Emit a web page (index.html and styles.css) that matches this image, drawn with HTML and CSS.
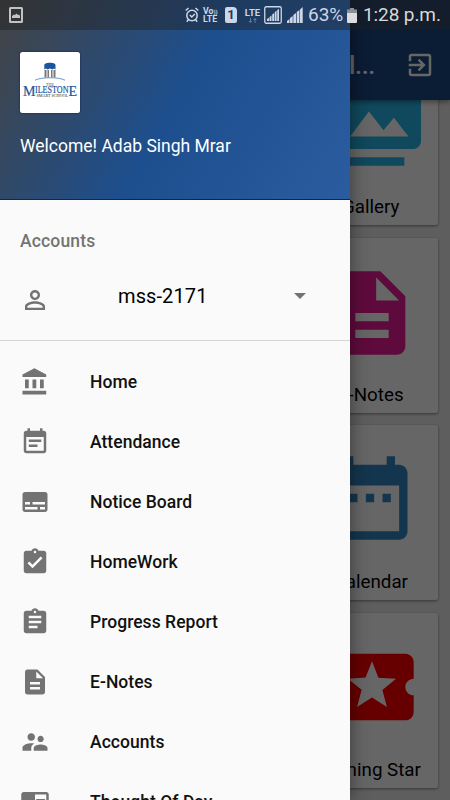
FILE: index.html
```
<!DOCTYPE html>
<html lang="en">
<head>
<meta charset="utf-8">
<title>The Milestone Smart School</title>
<link rel="stylesheet" href="styles.css">
</head>
<body>
<div class="screen">
  <div class="app">
    <header class="appbar">
      <span class="appbar-title">l...</span>
      <svg class="exit" viewBox="0 0 24 24"><path d="M10.09 15.59L11.5 17l5-5-5-5-1.41 1.41L12.67 11H3v2h9.67l-2.58 2.59zM19 3H5c-1.11 0-2 .9-2 2v4h2V5h14v14H5v-4H3v4c0 1.1.89 2 2 2h14c1.1 0 2-.9 2-2V5c0-1.1-.9-2-2-2z"/></svg>
    </header>
    <main class="tiles">
      <section class="tile gallery">
        <svg viewBox="0 0 24 24"><path d="M2 6H0v5h.01L0 20c0 1.1.9 2 2 2h18v-2H2V6zm20-2h-8l-2-2H6c-1.1 0-1.99.9-1.99 2L4 16c0 1.1.9 2 2 2h16c1.1 0 2-.9 2-2V6c0-1.1-.9-2-2-2zM7 15l4.5-6 3.5 4.51 2.5-3.01L21 15H7z"/></svg>
        <h2>Gallery</h2>
      </section>
      <section class="tile notes">
        <svg viewBox="0 0 24 24"><path d="M14 2H6c-1.1 0-1.99.9-1.99 2L4 20c0 1.1.89 2 1.99 2H18c1.1 0 2-.9 2-2V8l-6-6zm2 16H8v-2h8v2zm0-4H8v-2h8v2zm-3-5V3.5L18.5 9H13z"/></svg>
        <h2>E-Notes</h2>
      </section>
      <section class="tile calendar">
        <svg viewBox="0 0 24 24"><path d="M9 11H7v2h2v-2zm4 0h-2v2h2v-2zm4 0h-2v2h2v-2zm2-7h-1V2h-2v2H8V2H6v2H5c-1.11 0-1.99.9-1.99 2L3 20c0 1.1.89 2 2 2h14c1.1 0 2-.9 2-2V6c0-1.1-.9-2-2-2zm0 16H5V9h14v11z"/></svg>
        <h2>Calendar</h2>
      </section>
      <section class="tile star">
        <svg viewBox="0 0 24 24"><path d="M20 12c0-1.1.9-2 2-2V6c0-1.1-.9-2-2-2H4c-1.1 0-1.99.9-1.99 2v4c1.1 0 1.99.9 1.99 2s-.89 2-2 2v4c0 1.1.9 2 2 2h16c1.1 0 2-.9 2-2v-4c-1.1 0-2-.9-2-2zm-4.42 4.8L12 14.5l-3.58 2.3 1.08-4.12-3.29-2.69 4.24-.25L12 5.8l1.54 3.95 4.24.25-3.29 2.69 1.09 4.11z"/></svg>
        <h2>Shining Star</h2>
      </section>
    </main>
  </div>
  <div class="scrim"></div>

  <aside class="drawer">
    <div class="profile">
      <svg class="logo" viewBox="0 0 60 60">
        <path class="l-blue" d="M24.300 17v-4.500c0-3 11.200-3 11.200 0V17l-1.500-1-1.500 1-2.500-1-2.500 1-1.500-1z"/>
        <path class="l-pillar" d="M24.500 17.500h2V25h-2zM27.500 17.500H29V25h-1.500zM31 17.500h1.500V25H31zM33.500 17.500h2V25h-2z"/>
        <path class="l-arc" d="M15 27.700c6-3.300 24-3.300 30 0"/>
        <text class="l-the" x="30" y="33" text-anchor="middle">THE</text>
        <text class="l-name" y="43.500"><tspan class="l-cap" x="3">M</tspan><tspan class="l-mid" x="15" dy="-3.200" textLength="33.500" lengthAdjust="spacingAndGlyphs">ILESTON</tspan><tspan class="l-cap" x="48.500" dy="3.200">E</tspan></text>
        <text class="l-sub" x="16.500" y="44" textLength="31.500" lengthAdjust="spacingAndGlyphs">SMART SCHOOL</text>
      </svg>
      <p class="welcome">Welcome! Adab Singh Mrar</p>
    </div>

    <div class="accounts">
      <h3>Accounts</h3>
      <div class="account-row">
        <svg class="icon" viewBox="0 0 24 24"><path d="M12 5.900c1.160 0 2.100.940 2.100 2.100s-.940 2.100-2.100 2.100S9.900 9.160 9.900 8s.940-2.100 2.100-2.100m0 9c2.970 0 6.100 1.460 6.100 2.100v1.100H5.900V17c0-.640 3.130-2.100 6.100-2.100M12 4C9.790 4 8 5.790 8 8s1.790 4 4 4 4-1.790 4-4-1.790-4-4-4zm0 9c-2.670 0-8 1.340-8 4v3h16v-3c0-2.660-5.330-4-8-4z"/></svg>
        <span class="account-id">mss-2171</span>
        <svg class="caret" viewBox="0 0 12 6"><path d="M0 0h12L6 6z"/></svg>
      </div>
    </div>

    <nav class="menu">
      <a class="item"><svg class="icon" viewBox="0 0 24 24"><path d="M4 10v7h3v-7H4zm6 0v7h3v-7h-3zM2 22h19v-3H2v3zm14-12v7h3v-7h-3zm-4.500-9L2 6v2h19V6l-9.500-5z"/></svg>Home</a>
      <a class="item"><svg class="icon" viewBox="0 0 24 24"><path d="M17 10H7v2h10v-2zm2-7h-1V1h-2v2H8V1H6v2H5c-1.110 0-1.990.9-1.990 2L3 19c0 1.100.890 2 2 2h14c1.100 0 2-.9 2-2V5c0-1.100-.9-2-2-2zm0 16H5V8h14v11zm-5-5H7v2h7v-2z"/></svg>Attendance</a>
      <a class="item"><svg class="icon" viewBox="0 0 24 24"><path d="M20 4H4c-1.100 0-2 .9-2 2v12c0 1.100.9 2 2 2h16c1.100 0 2-.9 2-2V6c0-1.100-.9-2-2-2zM4 12h4v2H4v-2zm10 6H4v-2h10v2zm6 0h-4v-2h4v2zm0-4H10v-2h10v2z"/></svg>Notice Board</a>
      <a class="item"><svg class="icon" viewBox="0 0 24 24"><path d="M19 3h-4.180C14.400 1.840 13.300 1 12 1s-2.400.840-2.820 2H5c-1.100 0-2 .9-2 2v14c0 1.100.9 2 2 2h14c1.100 0 2-.9 2-2V5c0-1.100-.9-2-2-2zm-7 0c.550 0 1 .450 1 1s-.450 1-1 1-1-.450-1-1 .450-1 1-1zm-2 14l-4-4 1.410-1.410L10 14.170l6.590-6.590L18 9l-8 8z"/></svg>HomeWork</a>
      <a class="item"><svg class="icon" viewBox="0 0 24 24"><path d="M19 3h-4.180C14.400 1.840 13.300 1 12 1s-2.400.840-2.820 2H5c-1.100 0-2 .9-2 2v14c0 1.100.9 2 2 2h14c1.100 0 2-.9 2-2V5c0-1.100-.9-2-2-2zm-7 0c.550 0 1 .450 1 1s-.450 1-1 1-1-.450-1-1 .450-1 1-1zm2 14H7v-2h7v2zm3-4H7v-2h10v2zm0-4H7V7h10v2z"/></svg>Progress Report</a>
      <a class="item"><svg class="icon" viewBox="0 0 24 24"><path d="M14 2H6c-1.100 0-1.990.9-1.990 2L4 20c0 1.100.890 2 1.990 2H18c1.100 0 2-.9 2-2V8l-6-6zm2 16H8v-2h8v2zm0-4H8v-2h8v2zm-3-5V3.500L18.500 9H13z"/></svg>E-Notes</a>
      <a class="item"><svg class="icon" viewBox="0 0 24 24"><path d="M16.500 12c1.380 0 2.490-1.120 2.490-2.500S17.880 7 16.500 7C15.120 7 14 8.120 14 9.500s1.120 2.500 2.500 2.500zM9 11c1.660 0 2.990-1.340 2.990-3S10.660 5 9 5C7.340 5 6 6.340 6 8s1.340 3 3 3zm7.500 3c-1.830 0-5.500.920-5.500 2.750V19h11v-2.250c0-1.830-3.670-2.750-5.500-2.750zM9 13c-2.330 0-7 1.170-7 3.500V19h7v-2.250c0-.850.330-2.340 2.370-3.470C10.500 13.100 9.660 13 9 13z"/></svg>Accounts</a>
      <a class="item"><svg class="icon" viewBox="0 0 24 24"><path d="M13 12h7v1.500h-7zm0-2.500h7V11h-7zm0 5h7V16h-7zM21 4H3c-1.100 0-2 .9-2 2v13c0 1.100.9 2 2 2h18c1.100 0 2-.9 2-2V6c0-1.100-.9-2-2-2zm0 15h-9V6h9v13z"/></svg>Thought Of Day</a>
    </nav>
  </aside>

  <div class="statusbar">
    <svg class="s-pic" viewBox="0 0 14 16"><path fill-rule="evenodd" d="M1.500 0h11Q14 0 14 1.500v13q0 1.500-1.500 1.500h-11Q0 16 0 14.500v-13Q0 0 1.500 0zM2 2v12h10V2zM3 11V9l2-1.500 1 .5 1.500-1.500L9 8l1-.5L11 9v2z"/></svg>
    <svg class="s-alarm" viewBox="0 0 14 16"><g class="line"><circle cx="7" cy="8.500" r="5.200"/><path d="M4.800 8l2 2 3-3M.7 3.500L3.500 1M13.300 3.500L10.500 1M3.500 12.500l-1.700 2.300M10.500 12.500l1.700 2.300"/></g></svg>
    <span class="s-volte"><b>Vo<i>))</i></b><b>LTE</b></span>
    <span class="s-sim">1</span>
    <span class="s-lte"><b>LTE</b><svg viewBox="0 0 9 5"><path d="M2 0h1v3h1.500L2.500 5 .5 3H2zM6.500 5h1V2H9L7 0 5 2h1.500z"/></svg></span>
    <svg class="s-box" viewBox="0 0 18 18"><rect class="frame" x=".75" y=".75" width="16.500" height="16.500" rx="1.500"/><path d="M3 15v-2l2-1.200V15zM5.500 15v-4l2-1.500V15zM8.200 15V8.500l2-1.500v8zM10.800 15V6l1.800-1.200V15zM13.200 15V4L15 3v12z"/></svg>
    <svg class="s-sig" viewBox="0 0 16 16"><path d="M0 16v-2L2.500 12v4zM3 16v-5l2.700-2v7zM6.300 16V8L9 6v10zM9.700 16V5l2.700-2v13zM13 16V2.500L15.700 0v16z"/></svg>
    <span class="s-pct">63%</span>
    <svg class="s-bat" viewBox="0 0 10 15"><path class="dim" d="M3 0h4v1.500h3v4H0v-4h3z"/><path d="M0 5h10v9q0 1-1 1H1q-1 0-1-1z"/></svg>
    <span class="s-time">1:28 p.m.</span>
  </div>
</div>
</body>
</html>
```
FILE: styles.css
```
* { box-sizing: border-box; margin: 0; padding: 0; }
body { font-family: Roboto, "Liberation Sans", sans-serif; overflow: hidden; }
svg { display: block; flex: none; }

.screen { position: relative; width: 450px; height: 800px; overflow: hidden; background: #ececec; }

/* Page behind the drawer */
.app { height: 800px; overflow: hidden; display: flex; flex-direction: column; isolation: isolate; }
.appbar {
  height: 100px; flex: none; padding: 30px 15px 0 0;
  display: flex; align-items: center; justify-content: flex-end;
  background: #1c4885; z-index: 1; box-shadow: 0 2px 5px rgba(0, 0, 0, .4);
}
.appbar-title { font-size: 25px; font-weight: 500; color: #fff; margin-right: 30px; letter-spacing: -.3px; }
.exit { width: 30px; height: 30px; fill: #fff; }
.tiles { display: grid; grid-auto-rows: 175px; row-gap: 12.500px; margin: -50px 12.500px 0 306px; }
.tile {
  background: #fff; border-radius: 2.500px; box-shadow: 0 1px 3px rgba(0, 0, 0, .45);
  display: flex; flex-direction: column; align-items: center; padding-top: 24px;
}
.tile svg { width: 100px; height: 100px; }
.tile h2 { font-size: 18.750px; font-weight: 400; line-height: 24px; margin-top: 21px; margin-left: -2px; white-space: nowrap; color: #000; }
.gallery svg { fill: #2ab5e8; margin-left: -2px; }
.notes svg { fill: #ee1b96; margin-top: 1px; margin-bottom: -1px; }
.calendar svg { fill: #3484c4; margin-left: -3px; margin-top: -1px; margin-bottom: 1px; }
.star svg { fill: #f00; }

.scrim { position: absolute; inset: 0; background: rgba(0, 0, 0, .6); }

/* Navigation drawer */
.drawer {
  position: absolute; left: 0; top: 0; width: 350px; height: 800px; overflow: hidden;
  background: #fafafa; box-shadow: 0 0 18px rgba(0, 0, 0, .45);
}
.profile {
  height: 200px; padding: 52px 20px 0; border-bottom: 1px solid #042a63;
  background: linear-gradient(120deg, #434343 0%, #1d4f8f 51%, #2b5c9f 100%);
}
.logo { width: 60px; height: 61px; background: #fff; border-radius: 2.500px; box-shadow: 0 0 2px #0b1d55; }
.welcome { font-size: 17.500px; line-height: 22px; color: #fff; margin-top: 22px; }

.l-blue { fill: #1d559c; }
.l-pillar { fill: #77797d; }
.l-arc { fill: none; stroke: #6f94c4; stroke-width: 1; }
.l-the { font: 4px "Liberation Serif", serif; fill: #444; }
.l-name { font-family: "Liberation Serif", serif; fill: #1d559c; stroke: #1d559c; stroke-width: .2; }
.l-cap { font-size: 14px; }
.l-mid { font-size: 10.500px; }
.l-sub { font: 4.500px "Liberation Serif", serif; fill: #222; }

.accounts { height: 141px; border-bottom: 1px solid #d6d6d6; padding: 30px 20px 0; }
.accounts h3 { font-size: 17.500px; font-weight: 500; line-height: 22px; color: #737373; letter-spacing: .15px; }
.account-row { display: flex; align-items: center; height: 30px; margin-top: 33px; }
.account-id { font-size: 20px; line-height: 24px; margin: -9px 0 0 68px; color: #000; width: 176px; letter-spacing: .1px; }
.caret { width: 12px; height: 6px; fill: #737373; margin-top: -9px; }
.icon { width: 30px; height: 30px; fill: #737373; }

.menu { padding-top: 11px; }
.item {
  display: flex; align-items: center; height: 60px; gap: 40px; padding-left: 20px;
  font-size: 17.500px; font-weight: 500; color: #111; white-space: nowrap; letter-spacing: .04px;
}
.item .icon { margin-top: -1px; }

/* System status bar */
.statusbar {
  position: absolute; left: 0; top: 0; width: 450px; height: 30px;
  display: flex; align-items: center; padding-left: 9px;
  background: rgba(30, 30, 30, .42); color: #ccd6e6; fill: #ccd6e6;
}
.s-pic { width: 14px; height: 16px; fill: #c2c2c2; margin-right: 162px; }
.s-alarm { width: 14px; height: 16px; margin-right: 4px; }
.line { fill: none; stroke: #ccd6e6; stroke-width: 1.500; }
.s-volte { display: flex; flex-direction: column; width: 16px; margin-right: 6px; font-size: 8.800px; line-height: 8px; }
.s-volte i { font-style: normal; font-size: 6px; line-height: 1; }
.s-sim {
  width: 12px; height: 16px; margin-right: 7px; border-radius: 2px 4px 2px 2px;
  background: #ccd6e6; color: #173a6b; font-size: 13px; font-weight: 700; line-height: 16px; text-align: center;
}
.s-lte { display: flex; flex-direction: column; align-items: center; width: 17px; font-size: 9.500px; line-height: 9px; margin-right: 3px; }
.s-lte svg { width: 9px; height: 5px; opacity: .4; margin-top: 1px; }
.s-box { width: 18px; height: 18px; margin-right: 5px; }
.frame { fill: none; stroke: #ccd6e6; stroke-width: 1.300; }
.s-sig { width: 16px; height: 16px; margin-right: 5px; }
.s-pct { width: 39px; font-size: 19px; line-height: 30px; }
.s-bat { width: 10px; height: 15px; margin-right: 6px; fill: #dcdcdc; }
.dim { fill: #8a8f98; }
.s-time { font-size: 19px; line-height: 30px; white-space: nowrap; color: #d8d8d8; letter-spacing: -.1px; }
```
